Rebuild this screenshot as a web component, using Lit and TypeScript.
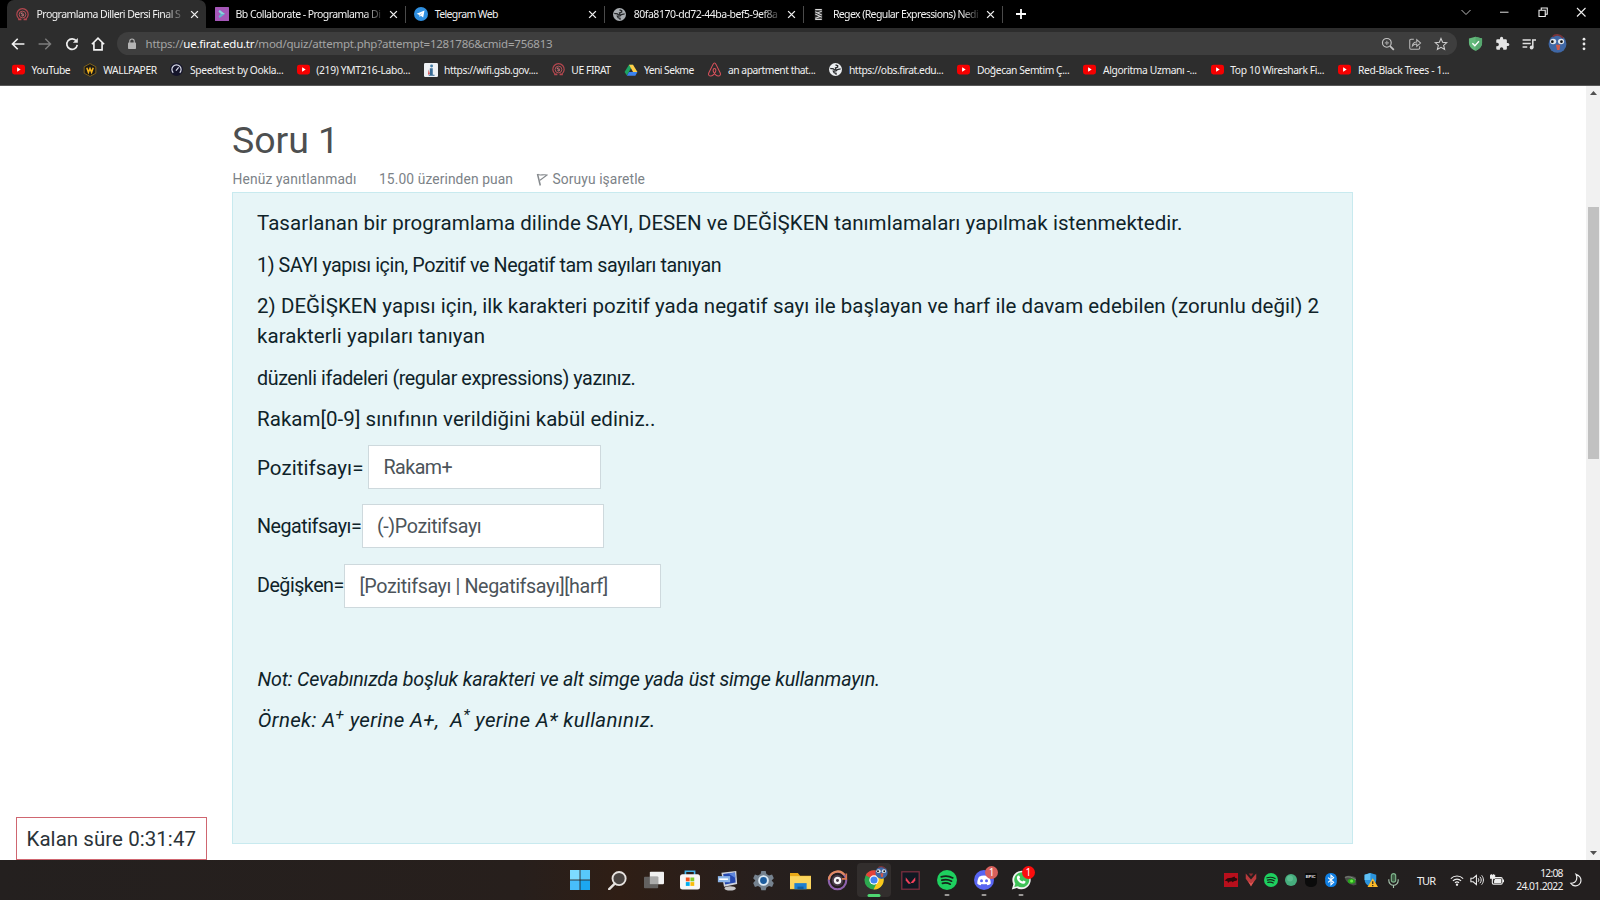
import { LitElement, html, css, svg, nothing } from "lit";
import type { TemplateResult } from "lit";
import { customElement, property } from "lit/decorators.js";
import { classMap } from "lit/directives/class-map.js";

/** One line of text whose tracking is adjusted so that it fills a given width. */
@customElement("fit-text")
class FitText extends LitElement {
  static styles = css`
    :host { display: inline-block; white-space: pre; flex: none; }
    .run { display: inline-block; }
  `;
  @property({ type: Number }) width = 0;

  firstUpdated() {
    this.style.width = `${this.width}px`;
    const natural = this.renderRoot.querySelector(".run")!.getBoundingClientRect().width;
    const count = (this.textContent ?? "").length;
    if (count > 1 && this.width > 0) {
      this.style.letterSpacing = `${(this.width - natural) / (count - 0.5)}px`;
    }
  }
  render() {
    return html`<span class="run"><slot></slot></span>`;
  }
}

const icon = (size: number, body: unknown, box = 24): TemplateResult =>
  html`<svg width=${size} height=${size} viewBox="0 0 ${box} ${box}" fill="none">${body}</svg>`;

const spotifyShape = svg`<circle cx="12" cy="12" r="12" fill="#1ed05f"/>
  <path d="M5 8.200c4.800-1.400 10-.9 14 1.300M5.800 12.200c4-1.200 8.300-.7 11.700 1.200M6.500 16c3.300-.9 6.500-.5 9.400 1.100" stroke="#16241b" stroke-width="2" stroke-linecap="round"/>`;
const globe = (c: string) => svg`<circle cx="12" cy="12" r="12" fill="${c}"/>
  <path d="M2.500 9.500c2 1.500 5 .5 7 2.500 1.500 1.500 3.500 0 3.500 0l-1-3 4-1.500V5l-4-1.500" stroke="#26282a" stroke-width="2.400"/>
  <path d="M21.500 11l-6 1-2.500 2.500-5 .5 1.500 3 3.500 1v2.500" stroke="#26282a" stroke-width="2.400"/>`;
const youtube = svg`<rect x="0" y="3" width="24" height="18" rx="4.500" fill="#f60000"/><path d="M9.500 8l6.500 4-6.500 4z" fill="#fff"/>`;
const firat = svg`<path d="M5.500 20A10.500 10.500 0 1 1 18.500 20" stroke="#b5474f" stroke-width="2.200"/><circle cx="12" cy="12" r="6.200" stroke="#c4555d" stroke-width="1.600"/><path d="M9 9l5 6M10 14c2 2 4 0 4-2s-3-4-5-2" stroke="#d98086" stroke-width="1.500"/><path d="M4 21h6M14 21h6" stroke="#b5474f" stroke-width="3.400"/>`;
const bird = svg`<circle cx="12" cy="12.500" r="11.300" fill="#3f67a5"/><path d="M6 3.500C9 0 15 .5 19 5" stroke="#7b3438" stroke-width="2.200"/>
  <ellipse cx="6.500" cy="9.500" rx="3.900" ry="3.500" fill="#dfe4ea"/><ellipse cx="16.500" cy="9.500" rx="3.900" ry="3.500" fill="#dfe4ea"/>
  <circle cx="5.500" cy="9.700" r="1.700" fill="#111"/><circle cx="17" cy="9.700" r="1.700" fill="#111"/><path d="M10 13.500h5.500l-1 6.800h-3z" fill="#cf5a4a"/>`;

interface Tab { title: string; w: number; icon: TemplateResult; active?: boolean }
const tabs: Tab[] = [
  { title: "Programlama Dilleri Dersi Final S", w: 144, icon: icon(13, firat), active: true },
  { title: "Bb Collaborate - Programlama Di", w: 145, icon: icon(14, svg`<rect width="24" height="24" rx="1" fill="#a557b8"/><path d="M8 5l9 7-9 7-2-3 4-4-4-4z" fill="#62b3cf"/><path d="M8 5l9 7h-6l-5-4z" fill="#8ed0dc"/>`) },
  { title: "Telegram Web", w: 63.5, icon: icon(14, svg`<circle cx="12" cy="12" r="12" fill="#2f8fe0"/><path d="M4.500 11.500L18 6l-2.300 12-4-3-2 2-.5-3.500z" fill="#fff"/><path d="M9.200 13.500L15 9.500l-4 5z" fill="#9cc8ee"/>`) },
  { title: "80fa8170-dd72-44ba-bef5-9ef8a", w: 144, icon: icon(13, globe("#a9adb1")) },
  { title: "Regex (Regular Expressions) Nedi", w: 145.5, icon: icon(13, svg`<path d="M5 1.500h14v21H5z" fill="#303030"/><path d="M6 3h12M6 21h12M6 7l12 6M6 11l12 6M18 6l-8 3M14 16l-8 3" stroke="#d8d8d8" stroke-width="1.900"/>`) },
];

interface Mark { label: string; x: number; w: number; icon: unknown; size: number }
const marks: Mark[] = [
  { label: "YouTube", x: 31.6, w: 38.8, icon: youtube, size: 13 },
  { label: "WALLPAPER", x: 103.2, w: 53.8, size: 14, icon: svg`<path d="M12 1l10 5.500v11L12 23 2 17.500v-11z" fill="#1b1a17" stroke="#8a6a1d" stroke-width="1.500"/><path d="M6.500 8l2.800 8L12 9.500l2.700 6.500 2.800-8" stroke="#f3b21c" stroke-width="2.600"/>` },
  { label: "Speedtest by Ookla...", x: 190, w: 93.5, size: 13, icon: svg`<circle cx="12" cy="12" r="12" fill="#15152b"/><path d="M6 18a8.500 8.500 0 1 1 12 0M11 14l5-6" stroke="#d9dbe8" stroke-width="2.200"/>` },
  { label: "(219) YMT216-Labo...", x: 316.3, w: 94, icon: youtube, size: 13 },
  { label: "https://wifi.gsb.gov....", x: 444, w: 94, size: 14, icon: svg`<rect width="24" height="24" rx="2" fill="#eef1f5"/><circle cx="13" cy="5" r="2.500" fill="#477fa8"/><path d="M10 9h5v11h3v2H8v-2h2z" fill="#396c96"/><path d="M8 11l2 8-3 1z" fill="#d13b3b"/>` },
  { label: "UE FIRAT", x: 571.4, w: 39.5, icon: firat, size: 13 },
  { label: "Yeni Sekme", x: 644, w: 50, size: 14, icon: svg`<path d="M8.500 3h7L12 9 5 21.500 1 15.500z" fill="#1da362"/><path d="M8.500 3h7l7.500 12.500h-7.500z" fill="#ffcf48"/><path d="M8.500 15.500H23L19.500 22H5z" fill="#3b82f0"/>` },
  { label: "an apartment that...", x: 728, w: 87.5, size: 15, icon: svg`<path d="M12 1.500c-1.500 0-2 1.500-3 3.500L2.800 17.500c-1.300 3 .8 5 3 5 3 0 6.200-3.800 7.700-6.500 1.600-3 .3-5.500-1.500-5.500s-3.100 2.500-1.500 5.500c1.500 2.700 4.700 6.500 7.700 6.500 2.200 0 4.300-2 3-5L15 5c-1-2-1.500-3.500-3-3.500z" stroke="#d9515c" stroke-width="1.700"/>` },
  { label: "https://obs.firat.edu...", x: 849, w: 94.5, icon: globe("#eceff1"), size: 13 },
  { label: "Doğecan Semtim Ç...", x: 977, w: 92.5, icon: youtube, size: 13 },
  { label: "Algoritma Uzmanı -...", x: 1103, w: 94, icon: youtube, size: 13 },
  { label: "Top 10 Wireshark Fi...", x: 1230.3, w: 94, icon: youtube, size: 13 },
  { label: "Red-Black Trees - 1...", x: 1358, w: 91.5, icon: youtube, size: 13 },
];

const closeX = icon(9, svg`<path d="M3 3l18 18M21 3L3 21" stroke="#eee" stroke-width="3.600"/>`);

@customElement("browser-chrome")
class BrowserChrome extends LitElement {
  static styles = css`
    :host { display: flex; flex-direction: column; height: 86px; background: #2d2d2d; color: #f1f1f1;
      font: 11px/14px "Noto Sans", "Open Sans", sans-serif; box-sizing: border-box; border-bottom: 1px solid #585858; }
    svg { display: block; flex: none; }
    .strip { display: flex; height: 28px; background: #000; padding-left: 7px; }
    .tab { display: flex; align-items: center; box-sizing: border-box; width: 199.1px; padding: 0 8.500px; border-radius: 7px 7px 0 0; flex: none; }
    .tab.active { background: #2d2d2d; }
    .fav { width: 14px; display: flex; justify-content: center; flex: none; }
    .title { margin-left: 7px; width: 147px; white-space: nowrap; font-size: 10.500px; flex: none; }
    .title.fade { mask-image: linear-gradient(90deg, #000 128px, transparent 149px); }
    .x { margin-left: 6px; }
    .sep { width: 1px; height: 17px; background: #4a4a4a; margin: 6px -0.500px 0; flex: none; }
    .plus { margin: 8px 0 0 13px; }
    .win { margin-left: auto; display: flex; gap: 26.500px; padding: 6px 13px 0 0; height: 12px; align-items: center; }
    .bar { display: flex; align-items: center; height: 23px; margin-top: 4px; }
    .nav { display: flex; gap: 12.800px; width: 106px; padding-left: 11px; align-items: center; flex: none; }
    .omni { display: flex; align-items: center; box-sizing: border-box; flex: none; width: 1339.500px; height: 23.500px; border-radius: 12px; background: #3e3e3e; padding: 0 8.500px; color: #a5a5a5; font-size: 11.500px; }
    .url { margin-left: 8px; }
    .url b { font-weight: 400; color: #fff; }
    .omniend { margin-left: auto; display: flex; gap: 12.500px; }
    .ext { display: flex; align-items: center; gap: 12px; margin-left: 11px; }
    .menu { margin-left: 15.500px; }
    .marks { display: flex; height: 29px; align-items: center; padding-left: 9px; }
    .mark { display: flex; align-items: center; flex: none; box-sizing: border-box; font-size: 10.300px; }
    .mark .ic { width: 18.800px; display: flex; justify-content: center; flex: none; }
    .mark .lb { margin-left: 3.800px; }
  `;

  render() {
    return html`
      <div class="strip">
        ${tabs.map((t, i) => html`
          <div class=${classMap({ tab: true, active: !!t.active })}>
            <span class="fav">${t.icon}</span>
            <span class=${classMap({ title: true, fade: t.w > 100 })}><fit-text width=${t.w}>${t.title}</fit-text></span>
            <span class="x">${closeX}</span>
          </div>
          ${i > 0 ? html`<span class="sep"></span>` : nothing}`)}
        <span class="plus">${icon(12, svg`<path d="M12 2v20M2 12h20" stroke="#fff" stroke-width="3.600"/>`)}</span>
        <div class="win">
          ${icon(12, svg`<path d="M3 8l9 9 9-9" stroke="#bbb" stroke-width="2"/>`)}
          ${icon(12, svg`<path d="M4 12.500h17" stroke="#bbb" stroke-width="2.400"/>`)}
          ${icon(12, svg`<path d="M4 8.500h12.500V21H4zM8.500 8V4h12v12.500H17" stroke="#eee" stroke-width="2.200"/>`)}
          ${icon(12, svg`<path d="M4 4l17 17M21 4L4 21" stroke="#eee" stroke-width="2.200"/>`)}
        </div>
      </div>
      <div class="bar">
        <div class="nav">
          ${icon(14, svg`<path d="M23 12H3M11.500 3L2.500 12l9 9" stroke="#f3f3f3" stroke-width="2.800"/>`)}
          ${icon(14, svg`<path d="M1 12h20M12.500 3l9 9-9 9" stroke="#7d7d7d" stroke-width="2.400"/>`)}
          ${icon(14, svg`<path d="M19.500 7A9 9 0 1 0 21 13.500" stroke="#ededed" stroke-width="2.900"/><path d="M22 1.500V10h-8.500z" fill="#ededed"/>`)}
          ${icon(14, svg`<path d="M1.500 12.500L12 2l10.500 10.500M5 10v12h14V10" stroke="#f3f3f3" stroke-width="2.800"/>`)}
        </div>
        <div class="omni">
          ${icon(12, svg`<rect x="4" y="9" width="16" height="13" rx="1.500" fill="#b4b4b4"/><path d="M7.500 10V6.500a4.500 4.500 0 0 1 9 0V10" stroke="#b4b4b4" stroke-width="2.200"/>`)}
          <fit-text class="url" width="407">https://<b>ue.firat.edu.tr</b>/mod/quiz/attempt.php?attempt=1281786&amp;cmid=756813</fit-text>
          <div class="omniend">
            ${icon(14, svg`<circle cx="10" cy="10" r="7.500" stroke="#c4c4c4" stroke-width="2"/><path d="M15.500 15.500L22 22" stroke="#c4c4c4" stroke-width="3"/><path d="M10 6.500v7M6.500 10h7" stroke="#a0a0a0" stroke-width="2"/>`)}
            ${icon(14, svg`<path d="M10 4H5a2 2 0 0 0-2 2v13a2 2 0 0 0 2 2h13a2 2 0 0 0 2-2v-3" stroke="#bcbcbc" stroke-width="1.800"/><path d="M7.500 15.500c.5-5 3.500-7 7.500-7V4.500l6.500 5.800L15 16v-4c-3.500 0-5.500 1-7.500 3.500z" stroke="#bcbcbc" stroke-width="1.800"/>`)}
            ${icon(14, svg`<path d="M12 2.500l2.800 6.600 7.200.6-5.500 4.700 1.700 7L12 17.600 5.800 21.400l1.700-7L2 9.700l7.200-.6z" stroke="#cfcfcf" stroke-width="1.800"/>`)}
          </div>
        </div>
        <div class="ext">
          ${icon(15, svg`<path d="M12 1l10.500 3v7c0 6-5 10-10.500 12.500C6.500 21 1.500 17 1.500 11V4z" fill="#63b97b"/><path d="M12 1l10.500 3v7c0 6-5 10-10.500 12.500z" fill="#57a86f"/><path d="M7 11.500l4 4 6.500-7" stroke="#fff" stroke-width="2.200"/>`)}
          ${icon(15, svg`<path d="M20.500 11H19V7a2 2 0 0 0-2-2h-4V3.500a2.500 2.500 0 0 0-5 0V5H4a2 2 0 0 0-2 2v3.800h1.500a2.700 2.700 0 0 1 0 5.400H2V20a2 2 0 0 0 2 2h3.800v-1.500a2.700 2.700 0 0 1 5.400 0V22H17a2 2 0 0 0 2-2v-4h1.500a2.500 2.500 0 0 0 0-5z" fill="#e4e4e4"/>`)}
          ${icon(14, svg`<path d="M1 5h14M1 11h14M1 17h8" stroke="#e0e0e0" stroke-width="2.600"/><path d="M18.500 18V5H24" stroke="#e0e0e0" stroke-width="2.600"/><circle cx="16.500" cy="18" r="3.300" fill="#e0e0e0"/>`)}
          ${icon(19, bird)}
        </div>
        <svg class="menu" width="4" height="14" viewBox="0 0 4 14"><g fill="#ececec"><circle cx="2" cy="2.200" r="1.400"/><circle cx="2" cy="7" r="1.400"/><circle cx="2" cy="11.800" r="1.400"/></g></svg>
      </div>
      <div class="marks">
        ${marks.map((m, i) => {
          const end = i + 1 < marks.length ? marks[i + 1].x : 1500;
          return html`<div class="mark" style="width:${end - m.x}px">
            <span class="ic">${icon(m.size, m.icon)}</span>
            <fit-text class="lb" width=${m.w}>${m.label}</fit-text>
          </div>`;
        })}
      </div>`;
  }
}

@customElement("quiz-page")
class QuizPage extends LitElement {
  static styles = css`
    :host { display: grid; grid-template-columns: 1fr 14px; height: 774px; background: #fff; position: relative;
      font-family: Roboto, sans-serif; color: #0f2329; }
    svg { display: block; }
    .main { padding: 31px 0 0 232px; }
    h3 { margin: 0; font-weight: 400; font-size: 37.500px; line-height: 46px; color: #4d4f50; height: 46px; }
    .meta { display: flex; height: 29px; align-items: center; color: #7c8287; font-size: 13.800px; line-height: 30px; padding-left: .5px; box-sizing: border-box; }
    .meta fit-text { margin-top: 2px; height: 29px; }
    .meta .grade { margin-left: 22.500px; }
    .flag { margin: 4px 5px 0 22.500px; }
    .panel { box-sizing: border-box; width: 1121px; height: 652px; background: #e7f5f7; border: 1px solid #c8eaef;
      padding: 15px 0 0 24px; display: flex; flex-direction: column; align-items: flex-start; }
    .line { height: 30px; line-height: 30px; font-size: 19.700px; flex: none; }
    .big { font-size: 20.500px; }
    .g2 { margin-top: 12.500px; } .g3 { margin-top: 10.500px; } .g4 { margin-top: .2px; }
    .g5 { margin-top: 13px; } .g6 { margin-top: 10.200px; }
    .row { display: flex; align-items: center; height: 44px; margin-top: 15.200px; font-size: 19.700px; line-height: 30px; flex: none; }
    .row > fit-text { margin-top: 1px; }
    .row.first { margin-top: 10.800px; }
    .row.first .lab { font-size: 20.500px; margin-right: 4.500px; }
    .field { box-sizing: border-box; height: 44px; background: #fff; border: 1px solid #ced9dd; padding: 7px 0 0 14.500px; color: #4c545a; }
    .note { margin-top: 57.700px; font-style: italic; padding-left: .5px; }
    .ex { margin-top: 10px; font-style: italic; display: flex; padding-left: .8px; }
    .ex sup { font-size: 75%; line-height: 0; position: relative; top: -.5em; vertical-align: baseline; }
    .timer { position: absolute; left: 16px; top: 731px; box-sizing: border-box; width: 191px; height: 43px; border: 1px solid #cf6670; background: #fff;
      padding: 0 0 0 9.500px; font-size: 20.500px; line-height: 42px; color: #2b3338; }
    .scroll { background: #f1f1f1; display: flex; flex-direction: column; align-items: center; padding: 5px 0 5px; }
    .thumb { width: 11px; height: 252px; background: #c1c1c1; margin: 112px 0 auto; }
  `;

  render() {
    return html`
      <div class="main">
        <h3><fit-text width="107">Soru 1</fit-text></h3>
        <div class="meta">
          <fit-text width="124">Henüz yanıtlanmadı</fit-text>
          <fit-text class="grade" width="134">15.00 üzerinden puan</fit-text>
          <svg class="flag" width="12" height="13" viewBox="0 0 12 13" fill="none"><path d="M1.500 1l2.800 11.500" stroke="#85898d" stroke-width="1.500"/><path d="M1.500 1.500c3 1.200 5.500-.3 9.500.5L4 7.200" stroke="#85898d" stroke-width="1.100"/></svg>
          <fit-text width="92.5">Soruyu işaretle</fit-text>
        </div>
        <div class="panel">
          <div class="line big"><fit-text width="925.5">Tasarlanan bir programlama dilinde SAYI, DESEN ve DEĞİŞKEN tanımlamaları yapılmak istenmektedir.</fit-text></div>
          <div class="line g2"><fit-text width="464.5">1) SAYI yapısı için, Pozitif ve Negatif tam sayıları tanıyan</fit-text></div>
          <div class="line big g3"><fit-text width="1062">2) DEĞİŞKEN yapısı için, ilk karakteri pozitif yada negatif sayı ile başlayan ve harf ile davam edebilen (zorunlu değil) 2</fit-text></div>
          <div class="line big g4"><fit-text width="228">karakterli yapıları tanıyan</fit-text></div>
          <div class="line g5"><fit-text width="378.5">düzenli ifadeleri (regular expressions) yazınız.</fit-text></div>
          <div class="line big g6"><fit-text width="398.5">Rakam[0-9] sınıfının verildiğini kabül ediniz..</fit-text></div>
          <div class="row first"><fit-text class="lab" width="106.5">Pozitifsayı=</fit-text>
            <div class="field" style="width:233px"><fit-text width="69">Rakam+</fit-text></div></div>
          <div class="row"><fit-text width="104.5">Negatifsayı=</fit-text>
            <div class="field" style="width:242px"><fit-text width="104.5">(-)Pozitifsayı</fit-text></div></div>
          <div class="row"><fit-text width="87">Değişken=</fit-text>
            <div class="field" style="width:317px"><fit-text width="248.5">[Pozitifsayı | Negatifsayı][harf]</fit-text></div></div>
          <div class="line note"><fit-text width="622.5">Not: Cevabınızda boşluk karakteri ve alt simge yada üst simge kullanmayın.</fit-text></div>
          <div class="line big ex"><fit-text width="397.5">Örnek: A<sup>+</sup> yerine A+,&nbsp; A<sup>*</sup> yerine A* kullanınız.</fit-text></div>
        </div>
      </div>
      <div class="scroll">
        <svg width="7" height="4" viewBox="0 0 7 4"><path d="M0 4l3.500-4L7 4z" fill="#505050"/></svg>
        <div class="thumb"></div>
        <svg width="7" height="4" viewBox="0 0 7 4"><path d="M0 0l3.500 4L7 0z" fill="#505050"/></svg>
      </div>
      <div class="timer"><fit-text width="169.5">Kalan süre 0:31:47</fit-text></div>`;
  }
}

interface App { body: unknown; size?: number; run?: string; badge?: string }
const apps: App[] = [
  { size: 20, body: svg`<path d="M0 0h11.500v11.500H0z" fill="#7ddcff"/><path d="M12.500 0H24v11.500H12.500z" fill="#58c9fb"/><path d="M0 12.500h11.500V24H0z" fill="#48befa"/><path d="M12.500 12.500H24V24H12.500z" fill="#1ca7f0"/>` },
  { size: 19, body: svg`<circle cx="14" cy="9.500" r="8.300" fill="#4a4441" stroke="#e6e2df" stroke-width="2.400"/><path d="M8.500 16L1.500 23" stroke="#e6e2df" stroke-width="3" stroke-linecap="round"/>` },
  { size: 20, body: svg`<rect x="7" y="2" width="17" height="15" rx="1" fill="#f1f1f1"/><rect x="0" y="8" width="17" height="14" rx="1" fill="#636160"/><path d="M7 8h10v9H7z" fill="#aaa"/>` },
  { size: 20, body: svg`<path d="M6.500 6V1.500h11V6" stroke="#43b2e8" stroke-width="2"/><rect x="0" y="5" width="24" height="18.500" rx="3" fill="#f6f6f6"/><path d="M7 9h4.600v4.600H7z" fill="#f1511b"/><path d="M12.500 9h4.600v4.600h-4.600z" fill="#80cc28"/><path d="M7 14.500h4.600v4.600H7z" fill="#00adef"/><path d="M12.500 14.500h4.600v4.600h-4.600z" fill="#fbbc09"/>` },
  { size: 21, body: svg`<ellipse cx="15" cy="21" rx="6.500" ry="2.500" fill="#c9c9cc"/><path d="M5 3l17-2 1 15-15 3z" fill="#cfd3dc"/><path d="M7 4.500l13.500-1.700.8 11.500-12 2.200z" fill="#2649b0"/><path d="M13 4l7.500-1 .5 6z" fill="#5d86de"/><path d="M1 7h14v7H1z" fill="#8cb5e8"/><path d="M2.500 10.500h10" stroke="#fff" stroke-width="1.800"/>` },
  { size: 21, body: svg`<path d="M9.500 1h5l.8 3.500 3 1.700L21.800 5l2 4.500-2.500 2.500 2.500 2.800-2 4.500-3.500-1.100-3 1.700-.8 3.100h-5l-.8-3.100-3-1.700-3.500 1.100-2-4.500L2.700 12 .2 9.500 2.200 5l3.500 1.200 3-1.700z" fill="#75828f"/><circle cx="12" cy="12" r="5" fill="#1c5c9e" stroke="#dceaf5" stroke-width="2.200"/>` },
  { size: 21, body: svg`<path d="M0 3.500h9l2.500 3H24V22H0z" fill="#e9a917"/><path d="M0 7h24v14.500H0z" fill="#fbd55e"/><path d="M5 22v-7h14v7z" fill="#1e7fd0"/><path d="M8.500 22v-3h7v3z" fill="#0f5c9f"/>` },
  { size: 21, body: svg`<circle cx="12" cy="12" r="10" stroke="#8f62ad" stroke-width="2.400"/><path d="M2.200 11A10 10 0 0 1 20 5.500" stroke="#e28b60" stroke-width="2.400"/><circle cx="12" cy="12" r="6.500" fill="#4a3b4a"/><circle cx="12" cy="12" r="3" stroke="#f4f4f4" stroke-width="2.600"/><path d="M22 4v6h-5" stroke="#d8764f" stroke-width="2"/>` },
  { size: 20, run: "wide", badge: "bird", body: svg`<circle cx="12" cy="12" r="11.500" fill="#2da94f"/><path d="M12 12L2 6.200A11.500 11.500 0 0 1 22 6.200z" fill="#e5433a"/><path d="M22.200 6.500A11.500 11.500 0 0 1 11.500 23.500L17 12l-4-5.500z" fill="#fbc71b"/><circle cx="12" cy="12" r="5.600" fill="#fff"/><circle cx="12" cy="12" r="4.300" fill="#4285f4"/>` },
  { size: 19, body: svg`<rect x="1" y="1" width="22" height="22" fill="#101822" stroke="#7b2f40" stroke-width="1.600"/><path d="M6 8l6.500 8H9.500L6 12z" fill="#f2405a"/><path d="M18 8v4l-2.500 3H12z" fill="#f2405a"/>` },
  { size: 20, run: "dot", body: spotifyShape },
  { size: 20, run: "dot", badge: "faded", body: svg`<circle cx="12" cy="12" r="12" fill="#5865f2"/><path d="M6 8c4-2 8-2 12 0 1.500 2.500 2.300 5.500 2 8.500-1 1-2.500 1.600-4 1.800l-1-1.500c-2 .5-4 .5-6 0l-1 1.500c-1.500-.2-3-.8-4-1.800-.3-3 .5-6 2-8.500z" fill="#fff"/><circle cx="9" cy="12.800" r="1.800" fill="#5865f2"/><circle cx="15" cy="12.800" r="1.800" fill="#5865f2"/>` },
  { size: 20, run: "dot", badge: "hot", body: svg`<path d="M1 23.500L2.800 17A11 11 0 1 1 7 21.500z" fill="#f2f2f2"/><path d="M4 20.500l1.200-4a9 9 0 1 1 3 3z" fill="#3fc257"/><path d="M8 7c1-1 2-.5 2.300.5l.7 1.600-1 1.400c.8 1.600 2 2.600 3.700 3.400l1.300-1.300 2.500 1.200c.3 1.500-1.500 3-3 2.800C10.500 16 7 12 7 9.500 7 8.500 7.400 7.500 8 7z" fill="#fff"/>` },
];

const tray: TemplateResult[] = [
  icon(14, svg`<rect width="24" height="24" fill="#b80f1c"/><path d="M1 13l5-4 7-1 5-2 1 2 4 2-1 3-5 1-2 2-2-2-4 1-2 2-1-3z" fill="#2a0a0c"/>`),
  icon(14, svg`<path d="M3 1l9 10L21 1v9l-9 12L3 10z" fill="#b93a3c"/><path d="M7 14l5 9 5-9-5 4z" fill="#e25a55"/><path d="M8 1h8l-4 5z" fill="#8c2c2e"/>`),
  icon(14, spotifyShape),
  icon(12, svg`<circle cx="12" cy="12" r="12" fill="#46ad7d"/><circle cx="10" cy="9" r="6" fill="#5cbd90"/>`),
  html`<span class="epic">EPIC</span>`,
  icon(14, svg`<rect x="2" y="0" width="20" height="24" rx="9" fill="#1080e6"/><path d="M7 8l9.500 8L12 20V4l4.500 4L7 16" stroke="#fff" stroke-width="1.900"/>`),
  icon(13, svg`<path d="M1 6c6-4 15-3 21 1l1 13-6 1C9 19 3 13 1 6z" fill="#4a4d49"/><ellipse cx="14" cy="13" rx="7" ry="4.800" fill="#27a31c"/><circle cx="14" cy="13" r="2.800" fill="#6bea46"/><path d="M2 6c7-2 14 0 20 5" stroke="#8e948c" stroke-width="1.500"/>`),
  icon(14, svg`<path d="M11 0l10 3v8c0 6-4 10-10 12C5 21 1 17 1 11V3z" fill="#2b93dc"/><path d="M11 0v12H1V3z" fill="#5fc0f4"/><path d="M15 9l9 15H6z" fill="#fbb929"/><path d="M15 14v5M15 20.500v2" stroke="#222" stroke-width="2"/>`),
  icon(15, svg`<rect x="8.500" y="1" width="7" height="13.500" rx="3.500" stroke="#7fb48c" stroke-width="1.800" fill="#3d5a43"/><path d="M4.500 10v2a7.500 7.500 0 0 0 15 0v-2M12 19.500V24" stroke="#a8c4ae" stroke-width="1.800"/>`),
];

@customElement("task-bar")
class TaskBar extends LitElement {
  static styles = css`
    :host { display: grid; grid-template-columns: 562px 477px 1fr; height: 40px; color: #f2f0ef;
      background: linear-gradient(90deg, #24201f 0, #271f1c 520px, #2f1e15 620px, #271f1d 760px, #221f1f 900px, #231f1f 1600px);
      font: 11px/13px "Noto Sans", "Open Sans", sans-serif; }
    svg { display: block; flex: none; }
    .apps { grid-column: 2; display: flex; }
    .app { position: relative; width: 36.700px; height: 40px; display: flex; align-items: center; justify-content: center; }
    .app.wide::before { content: ""; position: absolute; inset: 3px 1.500px; border-radius: 4px; background: #322e2d; }
    .app svg { position: relative; }
    .pill { position: absolute; bottom: 4px; left: 50%; transform: translateX(-50%); width: 5px; height: 2.500px; border-radius: 2px; background: #9b9896; }
    .pill.wide { width: 13px; height: 3px; bottom: 3.500px; background: #4fd672; }
    .badge { position: absolute; left: 19.500px; top: 6px; width: 13px; height: 13px; border-radius: 50%; text-align: center; font-size: 10px; line-height: 13px; color: #fff; }
    .faded { background: #d8605c; } .hot { background: #fb0d0d; }
    .av { position: absolute; left: 19.500px; top: 6px; }
    .tray { display: flex; align-items: center; }
    .cell { width: 20.050px; display: flex; justify-content: center; flex: none; }
    .icons { display: flex; align-items: center; margin-left: 181.500px; width: 187px; flex: none; }
    .icons .cell:last-child { margin-left: 2.500px; }
    .epic { width: 12px; height: 14px; background: #0b0b0b; border-radius: 1px 1px 5px 5px; font: 700 4.300px/8px "Liberation Sans", sans-serif; color: #eee; text-align: center; }
    .lang { margin-left: 9.500px; }
    .sys { display: flex; margin-left: 11.500px; }
    .time { display: flex; flex-direction: column; align-items: flex-end; width: 56px; font-size: 10.300px; }
    .moon { margin-left: 6px; }
  `;

  render() {
    return html`
      <div class="apps">
        ${apps.map(a => html`<div class=${classMap({ app: true, wide: a.run === "wide" })}>
          ${icon(a.size ?? 20, a.body)}
          ${a.badge === "bird" ? html`<span class="av">${icon(13, bird)}</span>`
            : a.badge ? html`<span class="badge ${a.badge}">1</span>` : nothing}
          ${a.run ? html`<span class="pill ${a.run}"></span>` : nothing}
        </div>`)}
      </div>
      <div class="tray">
        <div class="icons">${tray.map(t => html`<span class="cell">${t}</span>`)}</div>
        <fit-text class="lang" width="18.5">TUR</fit-text>
        <div class="sys">
          <span class="cell">${icon(14, svg`<path d="M1.500 9.500a15 15 0 0 1 21 0M5 13.500a10 10 0 0 1 14 0M8.500 17a5 5 0 0 1 7 0" stroke="#eee" stroke-width="2"/><circle cx="12" cy="20" r="2" fill="#eee"/>`)}</span>
          <span class="cell">${icon(14, svg`<path d="M1.500 9v6h4l5.500 5V4L5.500 9z" stroke="#eee" stroke-width="1.800"/><path d="M14 9c1.500 2 1.500 4 0 6M17 6.500c3 3.500 3 7.500 0 11M20 4c4 5 4 11 0 16" stroke="#eee" stroke-width="1.700"/>`)}</span>
          <span class="cell">${icon(14, svg`<rect x="4" y="8" width="17" height="11" rx="2" stroke="#eee" stroke-width="1.900"/><path d="M9 10h10v7H7v-4z" fill="#eee"/><path d="M23 11v5" stroke="#eee" stroke-width="2"/><path d="M1 4h7v5H1zM2.500 2v3M6 2v3M4.500 8v5" stroke="#eee" stroke-width="1.800" fill="#eee"/>`)}</span>
        </div>
        <div class="time"><fit-text width="23">12:08</fit-text><fit-text width="47">24.01.2022</fit-text></div>
        <span class="moon">${icon(14, svg`<path d="M12 2c5 2 9 6 8.500 11.500C20 19 15.500 22.500 10.500 22c-3-.3-6-2-7.500-4.500 5.500 0 9-2.500 10-6.500.8-3.300.3-6.500-1-9z" stroke="#eee" stroke-width="2"/>`)}</span>
      </div>`;
  }
}

@customElement("app-root")
class AppRoot extends LitElement {
  static styles = css`:host { display: flex; flex-direction: column; width: 1600px; height: 900px; overflow: hidden; }`;
  render() {
    return html`<browser-chrome></browser-chrome><quiz-page></quiz-page><task-bar></task-bar>`;
  }
}
